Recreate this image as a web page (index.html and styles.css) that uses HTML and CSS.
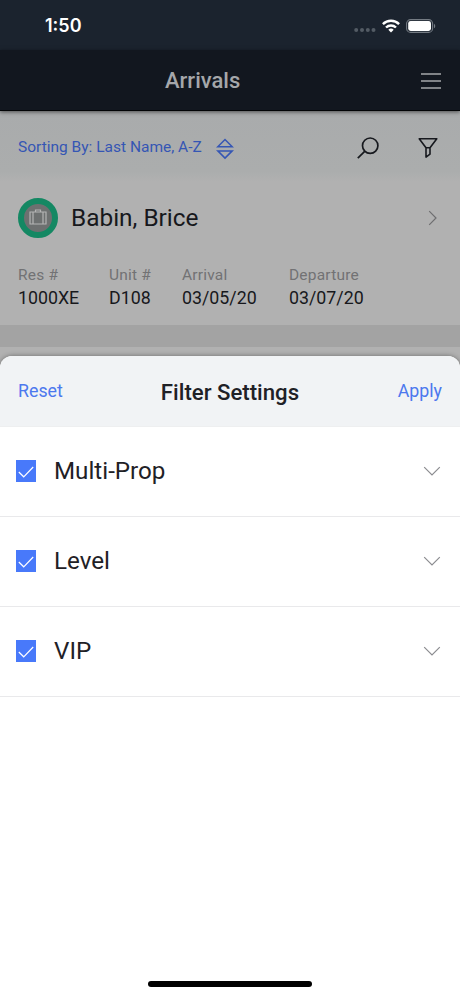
FILE: index.html
```html
<!DOCTYPE html>
<html lang="en">
<head>
<meta charset="utf-8">
<title>Arrivals</title>
<link rel="stylesheet" href="styles.css">
</head>
<body>
<div class="screen">
  <div class="app">
    <div class="status">
      <span class="time">1:50</span>
      <div class="signals">
        <svg class="dots" width="22" height="4" viewBox="0 0 22 4"><g fill="#535b64"><circle cx="2.2" cy="2" r="2"/><circle cx="8" cy="2" r="2"/><circle cx="13.8" cy="2" r="2"/><circle cx="19.5" cy="2" r="2"/></g></svg>
        <svg class="wifi" width="18" height="14" viewBox="0 0 18 14"><g fill="none" stroke="#fff" stroke-width="2.4"><path d="M.9 5.1a11.5 11.5 0 0 1 16.2 0"/><path d="M4 8.5a7.2 7.2 0 0 1 10 0"/></g><path d="M6.3 10.8a4 4 0 0 1 5.4 0L9 13.5z" fill="#fff"/></svg>
        <svg class="battery" width="30" height="14" viewBox="0 0 30 14"><rect x=".6" y=".6" width="26" height="12.8" rx="4" fill="none" stroke="#747b83" stroke-width="1.1"/><rect x="2.2" y="2.1" width="22.8" height="9.8" rx="2.4" fill="#fff"/><path d="M28 4.7v4.6c1.7-.8 1.7-3.8 0-4.6z" fill="#747b83"/></svg>
      </div>
    </div>
    <header class="nav">
      <h1>Arrivals</h1>
      <svg class="menu" width="20" height="16" viewBox="0 0 20 16"><path d="M0 1h20M0 8h20M0 15h20" stroke="#a5a8ab" stroke-width="1.6"/></svg>
    </header>
    <div class="toolbar">
      <span class="sort">Sorting By: Last Name, A-Z</span>
      <svg class="sorticon" width="18" height="22" viewBox="0 0 18 22"><path d="M1.8 8.7 9 1.5l7.2 7.2zM1.8 12.9 9 20.1l7.2-7.2z" fill="none" stroke="#3556b4" stroke-width="1.5"/></svg>
      <svg class="search" width="24" height="24" viewBox="0 0 24 24"><g fill="none" stroke="#17191e" stroke-width="1.7"><circle cx="14.2" cy="9.7" r="7.7"/><path d="M8.7 15.3 1.8 22.2"/></g></svg>
      <svg class="funnel" width="20" height="22" viewBox="0 0 20 22"><path d="M1.2 1.8h17.6L12 10.8v6.4L8 20.1v-9.3zM8 10.8h4" fill="none" stroke="#17191e" stroke-width="1.6" stroke-linejoin="round"/></svg>
    </div>
    <section class="card">
      <div class="guest">
        <div class="avatar"><svg width="18" height="16" viewBox="0 0 18 16"><path d="M1 3h16v12H1zM4 3v12M14 3v12M6.5 3V1h5v2" fill="none" stroke="#b4b4b4" stroke-width="1.2"/></svg></div>
        <span class="name">Babin, Brice</span>
        <svg class="next" width="10" height="16" viewBox="0 0 10 16"><path d="M1.2 1.2 8 8l-6.8 6.8" fill="none" stroke="#6e6e70" stroke-width="1.2"/></svg>
      </div>
      <dl class="details">
        <div class="res"><dt>Res #</dt><dd>1000XE</dd></div>
        <div class="unit"><dt>Unit #</dt><dd>D108</dd></div>
        <div class="arrival"><dt>Arrival</dt><dd>03/05/20</dd></div>
        <div><dt>Departure</dt><dd>03/07/20</dd></div>
      </dl>
    </section>
    <div class="divider"></div>
  </div>
  <main class="sheet">
    <div class="sheet-head">
      <span class="action">Reset</span>
      <h2>Filter Settings</h2>
      <span class="action apply">Apply</span>
    </div>
    <div class="row"><span class="check"><svg width="16" height="12" viewBox="0 0 16 12"><path d="M.8 6 5.7 10.8 15.2 1" fill="none" stroke="#fff" stroke-width="1.2"/></svg></span><span class="label">Multi-Prop</span><svg class="down" width="18" height="11" viewBox="0 0 18 11"><path d="M1.2 1.2 9 9l7.8-7.8" fill="none" stroke="#8b8c90" stroke-width="1.2"/></svg></div>
    <div class="row"><span class="check"><svg width="16" height="12" viewBox="0 0 16 12"><path d="M.8 6 5.7 10.8 15.2 1" fill="none" stroke="#fff" stroke-width="1.2"/></svg></span><span class="label">Level</span><svg class="down" width="18" height="11" viewBox="0 0 18 11"><path d="M1.2 1.2 9 9l7.8-7.8" fill="none" stroke="#8b8c90" stroke-width="1.2"/></svg></div>
    <div class="row"><span class="check"><svg width="16" height="12" viewBox="0 0 16 12"><path d="M.8 6 5.7 10.8 15.2 1" fill="none" stroke="#fff" stroke-width="1.2"/></svg></span><span class="label">VIP</span><svg class="down" width="18" height="11" viewBox="0 0 18 11"><path d="M1.2 1.2 9 9l7.8-7.8" fill="none" stroke="#8b8c90" stroke-width="1.2"/></svg></div>
    <div class="home"></div>
  </main>
</div>
</body>
</html>
```
FILE: styles.css
```css
* { box-sizing: border-box; }
body { margin: 0; font-family: Roboto, "Liberation Sans", sans-serif; color: #1f2126; }
h1, h2, dl, dd { margin: 0; }
h1, h2 { font-weight: 500; }
svg { display: block; flex: none; }
span { white-space: nowrap; }
.screen { width: 460px; height: 996px; display: flex; flex-direction: column; overflow: hidden; background: #fff; }
.app { flex: none; height: 372px; background: #b1b1b1; }
.status { height: 50px; background: #1b232e; display: flex; align-items: center; justify-content: space-between; padding: 1px 24px 0 45px; }
.time { font: 600 18px/22px Inter, sans-serif; color: #fff; padding-top: 1px; }
.signals { display: flex; align-items: center; }
.dots { margin: 8px 6px 0 0; }
.wifi { margin-right: 6px; }
.nav { height: 61px; background: #12171f; border-bottom: 1px solid #020305; display: flex; align-items: center; justify-content: space-between; padding: 2px 19px 0 165px; box-shadow: 0 1px 4px rgba(0, 0, 0, .55); position: relative; }
.nav h1 { font-size: 22px; line-height: 28px; color: #a5a7aa; }
.toolbar { height: 71px; background: linear-gradient(#a9abac, #abadad 85%, #b1b1b1); display: flex; align-items: center; padding: 3px 22px 0 18px; }
.sort { font-size: 15.5px; line-height: 20px; color: #3556b4; margin-top: -3px; }
.sorticon { margin: 1px 0 0 14px; }
.search { margin-left: auto; }
.funnel { margin-left: 38px; }
.card { height: 143px; padding: 16px 22px 0 18px; }
.guest { display: flex; align-items: center; height: 40px; }
.avatar { width: 40px; height: 40px; border-radius: 50%; border: 6px solid #148863; background: #6d7070; display: flex; align-items: center; justify-content: center; padding-bottom: 3px; }
.name { font-size: 24.4px; line-height: 30px; margin-left: 13px; color: #17181c; }
.next { margin-left: auto; }
.details { display: flex; margin-top: 27px; }
.details dt { font-size: 15.5px; line-height: 20px; color: #727274; letter-spacing: .2px; }
.details dd { font-size: 17.8px; line-height: 26px; color: #17181c; }
.res { width: 91px; }
.unit { width: 73px; }
.arrival { width: 107px; }
.divider { height: 22px; background: #a3a3a3; }
.sheet { flex: 1; margin-top: -16px; background: #fff; border-radius: 12px 12px 0 0; box-shadow: 0 0 5px rgba(0, 0, 0, .4); display: flex; flex-direction: column; position: relative; }
.sheet-head { height: 71px; background: #f1f3f5; border-bottom: 1px solid #eeeff0; border-radius: 12px 12px 0 0; display: grid; grid-template-columns: 1fr auto 1fr; align-items: center; padding: 0 18px; }
.sheet-head h2 { font-size: 22.2px; line-height: 28px; padding-top: 1px; }
.action { font-size: 17.8px; line-height: 22px; color: #4c78ee; }
.apply { text-align: right; }
.row { height: 90px; border-bottom: 1px solid #e9e9eb; display: flex; align-items: center; padding: 0 19px 2px 16px; }
.check { width: 20px; height: 22px; background: #4879fa; display: flex; align-items: center; justify-content: center; padding-top: 2px; }
.label { font-size: 24.2px; line-height: 30px; margin-left: 18px; }
.down { margin: 2px 0 0 auto; }
.home { width: 164px; height: 6px; border-radius: 3px; background: #000; margin: auto auto 9px; }
```
